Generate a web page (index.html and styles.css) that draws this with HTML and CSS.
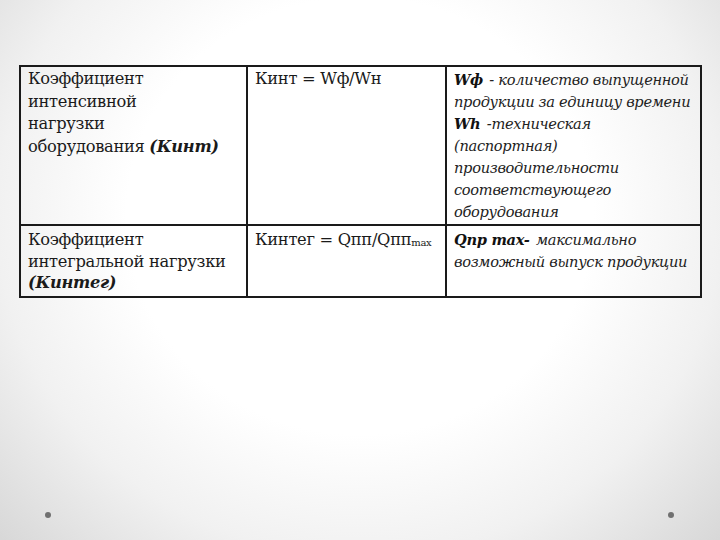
FILE: index.html
```html
<!DOCTYPE html>
<html lang="ru">
<head>
<meta charset="utf-8">
<link rel="stylesheet" href="styles.css">
</head>
<body>
<div class="slide">
  <table class="grid">
    <colgroup>
      <col class="c1"><col class="c2"><col class="c3">
    </colgroup>
    <tr class="r1">
      <td>Коэффициент<br>интенсивной<br>нагрузки<br>оборудования <b class="bi">(Кинт)</b></td>
      <td>Кинт = Wф/Wн</td>
      <td class="it"><b>Wф</b> - количество выпущенной продукции за единицу времени <b>Wh</b> -техническая<br>(паспортная)<br>производительности соответствующего оборудования</td>
    </tr>
    <tr class="r2">
      <td>Коэффициент<br>интегральной нагрузки<br><b class="bi">(Кинтег)</b></td>
      <td>Кинтег = Qпп/Qпп<sub>max</sub></td>
      <td class="it"><b>Qпр max-</b> максимально возможный выпуск продукции</td>
    </tr>
  </table>
  <div class="spacer"></div>
  <div class="foot">
    <span class="dot"></span>
    <span class="dot"></span>
  </div>
</div>
</body>
</html>
```
FILE: styles.css
```css
html, body {
  margin: 0;
  padding: 0;
}
body {
  width: 720px;
  height: 540px;
  overflow: hidden;
  background: radial-gradient(ellipse 72% 90% at 50% 40%, #ffffff 45%, #f1f1f1 70%, #d4d4d4 100%);
  font-family: "DejaVu Serif", "Liberation Serif", serif;
  color: #111;
}
.slide {
  height: 540px;
  display: flex;
  flex-direction: column;
  padding: 65px 20px 0 19px;
  box-sizing: border-box;
}
.grid {
  border-collapse: collapse;
  width: 681px;
  table-layout: fixed;
}
.c1 { width: 227px; }
.c2 { width: 199px; }
.c3 { width: 255px; }
.grid td {
  border: 2px solid #1a1a1a;
  vertical-align: top;
  padding: 1px 2px 0 7px;
  font-size: 16.3px;
  line-height: 22.5px;
  letter-spacing: -0.3px;
  color: #1a1a1a;
}
.r1 td { height: 155px; }
.r2 td { height: 67px; line-height: 21.5px; padding-top: 3px; }
.bi {
  font-style: italic;
  font-weight: bold;
}
.grid td.it {
  font-style: italic;
  font-size: 14.6px;
  line-height: 22px;
  padding-left: 7px;
  padding-right: 1px;
  padding-top: 2px;
  letter-spacing: -0.3px;
  color: #222;
}
.grid .r2 td.it {
  line-height: 21.5px;
  padding-top: 3px;
}
.it b {
  font-weight: bold;
  color: #111;
  margin-right: 2px;
}
sub {
  font-size: 10px;
  vertical-align: -1px;
  line-height: 0;
}
.spacer { flex: 1; }
.foot {
  display: flex;
  justify-content: space-between;
  padding: 0 26px 22px 26px;
}
.dot {
  width: 6px;
  height: 6px;
  border-radius: 50%;
  background: #707070;
}
```
